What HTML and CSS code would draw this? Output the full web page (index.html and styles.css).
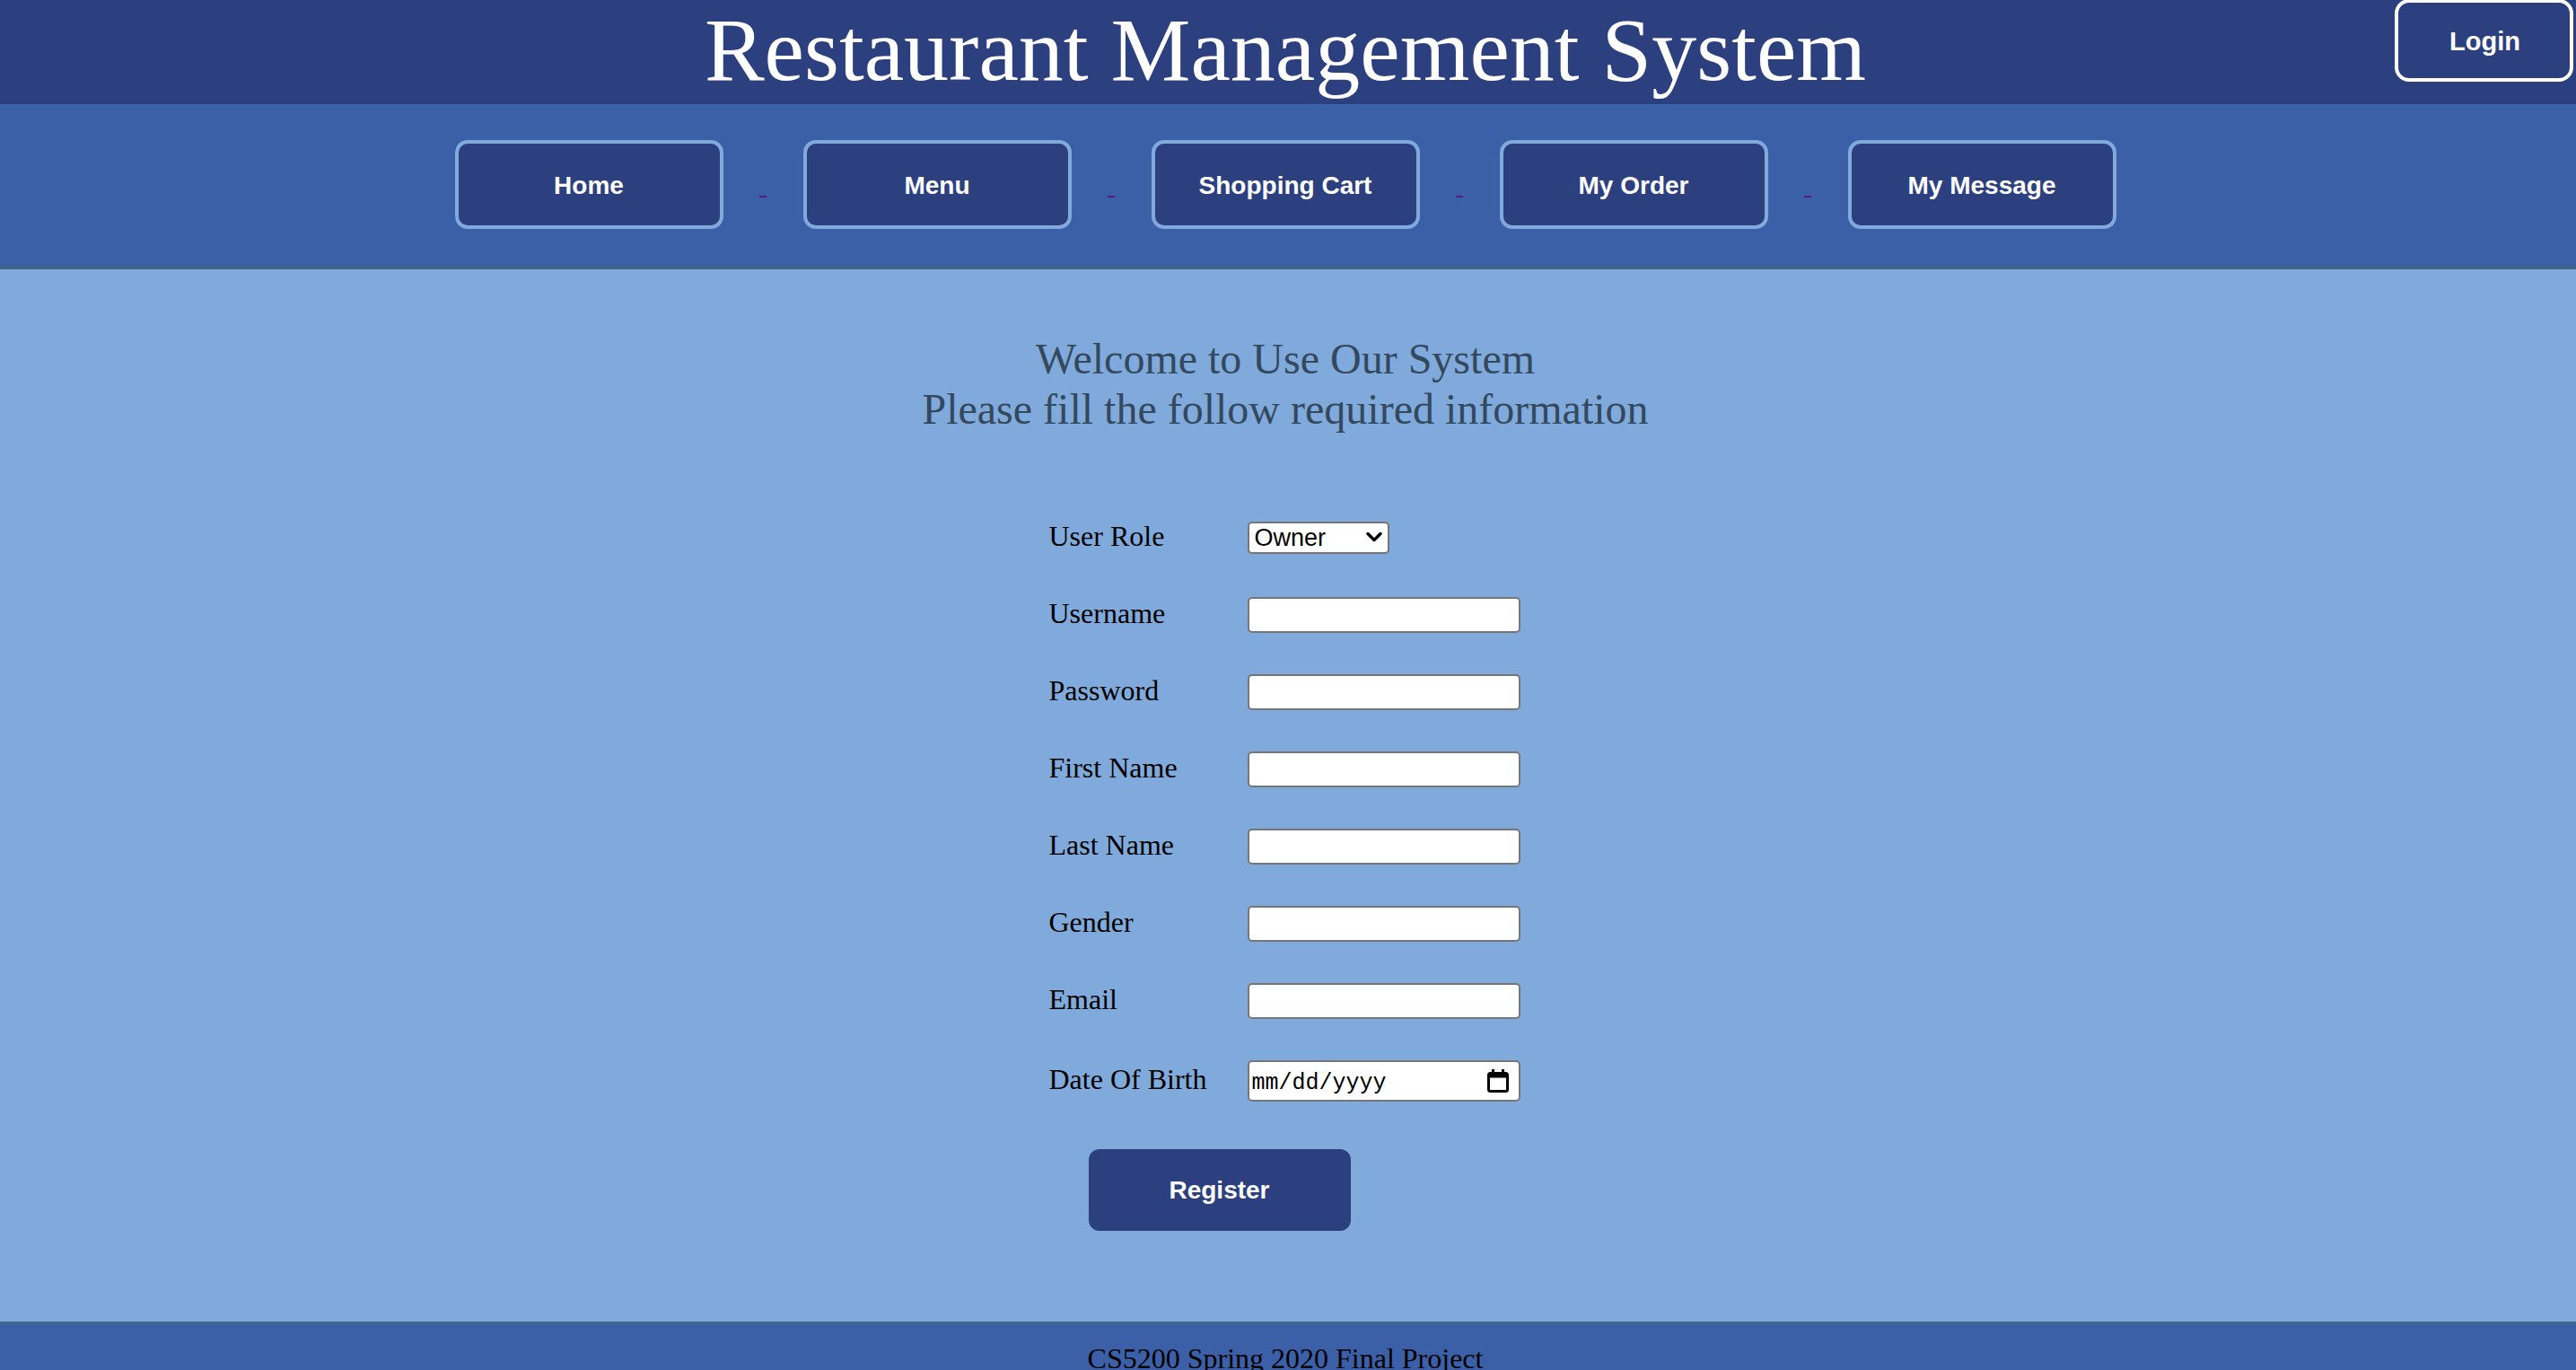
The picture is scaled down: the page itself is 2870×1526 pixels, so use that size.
FILE: index.html
```html
<!DOCTYPE html>
<html lang="en">
<head>
<meta charset="utf-8">
<title>Restaurant Management System</title>
<link rel="stylesheet" href="styles.css">
</head>
<body>
<header class="site-header">
  <h1 class="site-title">Restaurant Management System</h1>
  <button class="login-btn" type="button">Login</button>
</header>

<nav class="main-nav">
  <button class="nav-btn" type="button">Home</button><span class="nav-sep"></span>
  <button class="nav-btn" type="button">Menu</button><span class="nav-sep"></span>
  <button class="nav-btn" type="button">Shopping Cart</button><span class="nav-sep"></span>
  <button class="nav-btn" type="button">My Order</button><span class="nav-sep"></span>
  <button class="nav-btn" type="button">My Message</button>
</nav>

<main class="content">
  <div class="welcome">
    <div>Welcome to Use Our System</div>
    <div>Please fill the follow required information</div>
  </div>

  <form class="reg-form">
    <div class="form-grid">
      <label class="field-label" for="role">User Role</label>
      <span class="select-wrap">
        <select id="role" class="role-select">
          <option>Owner</option>
          <option>Customer</option>
        </select>
        <svg class="select-arrow" width="18" height="13" viewBox="0 0 18 13"><polyline points="2,2.5 9,9.5 16,2.5" fill="none" stroke="#000" stroke-width="3.4" stroke-linecap="round" stroke-linejoin="round"/></svg>
      </span>

      <label class="field-label" for="username">Username</label>
      <input id="username" class="text-input" type="text">

      <label class="field-label" for="password">Password</label>
      <input id="password" class="text-input" type="password">

      <label class="field-label" for="first">First Name</label>
      <input id="first" class="text-input" type="text">

      <label class="field-label" for="last">Last Name</label>
      <input id="last" class="text-input" type="text">

      <label class="field-label" for="gender">Gender</label>
      <input id="gender" class="text-input" type="text">

      <label class="field-label" for="email">Email</label>
      <input id="email" class="text-input" type="text">

      <label class="field-label" for="dob">Date Of Birth</label>
      <span class="date-box">
        <span class="date-text">mm/dd/yyyy</span>
        <svg class="cal-icon" width="26" height="28" viewBox="0 0 26 28"><rect x="2.5" y="5.5" width="21" height="20" rx="2" fill="none" stroke="#000" stroke-width="3"/><rect x="2.5" y="5.5" width="21" height="5" fill="#000"/><rect x="6" y="1" width="3" height="6" fill="#000"/><rect x="17" y="1" width="3" height="6" fill="#000"/></svg>
      </span>
    </div>
    <button class="register-btn" type="button">Register</button>
  </form>
</main>

<footer class="site-footer">CS5200 Spring 2020 Final Project</footer>
</body>
</html>
```

FILE: styles.css
```css
html, body {
  margin: 0;
  padding: 0;
}

body {
  background: #7faadb;
  font-family: "Liberation Serif", "Times New Roman", serif;
  color: #000;
}

.site-header {
  position: relative;
  background: #2c3f7e;
  height: 116px;
  padding-right: 6px;
  text-align: center;
}

.site-title {
  margin: 0;
  font-family: "Liberation Serif", "Times New Roman", serif;
  font-weight: normal;
  font-size: 100px;
  line-height: 112px;
  color: #ffffff;
}

.login-btn {
  position: absolute;
  top: -1px;
  right: 3px;
  width: 199px;
  height: 92px;
  box-sizing: border-box;
  background: #2c3f7e;
  border: 4px solid #ffffff;
  border-radius: 16px;
  color: #ffffff;
  font-family: "Liberation Sans", Arial, sans-serif;
  font-weight: bold;
  font-size: 29px;
  padding: 2px 0 0 2px;
  cursor: pointer;
}

.main-nav {
  background: #3c60a8;
  border-bottom: 4px solid #3e6489;
  padding: 40px 6px 41px 0;
  display: flex;
  justify-content: center;
  align-items: flex-start;
}

.nav-btn {
  width: 299px;
  height: 99px;
  box-sizing: border-box;
  background: #2c3f7e;
  border: 4px solid #7faadb;
  border-radius: 14px;
  color: #ffffff;
  font-family: "Liberation Sans", Arial, sans-serif;
  font-weight: bold;
  font-size: 28px;
  padding: 2px 0 0 0;
  cursor: pointer;
}

.nav-sep {
  width: 8px;
  height: 2px;
  margin: 62px 41px 0 40px;
  background: #551a8b;
}

.content {
  padding: 72px 6px 101px 0;
}

.welcome {
  text-align: center;
  color: #34495e;
  font-size: 48px;
  line-height: 56px;
}

.reg-form {
  width: 525px;
  margin: 95px auto 0;
  position: relative;
  left: -1px;
}

.form-grid {
  display: grid;
  grid-template-columns: 221px 304px;
  row-gap: 46px;
  align-items: center;
}

.field-label {
  font-size: 32px;
  line-height: 37px;
  padding-bottom: 3px;
}

.select-wrap {
  position: relative;
  display: block;
  width: 158px;
  height: 36px;
}

.role-select {
  -webkit-appearance: none;
  appearance: none;
  width: 158px;
  height: 36px;
  box-sizing: border-box;
  background: #ffffff;
  border: 2px solid #767676;
  border-radius: 5px;
  font-family: "Liberation Sans", Arial, sans-serif;
  font-size: 27px;
  color: #000;
  padding: 0 0 0 6px;
  margin: 0;
}

.select-arrow {
  position: absolute;
  left: 132px;
  top: 11px;
  pointer-events: none;
}

.text-input {
  width: 304px;
  height: 40px;
  box-sizing: border-box;
  background: #ffffff;
  border: 2px solid #767676;
  border-radius: 5px;
  margin: 0;
  padding: 0 6px;
  font-size: 26px;
}

.date-box {
  display: flex;
  align-items: center;
  justify-content: space-between;
  width: 304px;
  height: 46px;
  box-sizing: border-box;
  background: #ffffff;
  border: 2px solid #767676;
  border-radius: 5px;
  padding: 0 10px 0 3px;
}

.date-text {
  font-family: "Liberation Mono", "Courier New", monospace;
  font-size: 25px;
  padding-top: 4px;
}

.cal-icon {
  display: block;
}

.register-btn {
  display: block;
  margin: 53px 0 0 44px;
  width: 292px;
  height: 91px;
  background: #2c3f7e;
  border: none;
  border-radius: 12px;
  color: #ffffff;
  font-family: "Liberation Sans", Arial, sans-serif;
  font-weight: bold;
  font-size: 28px;
  padding: 0;
  cursor: pointer;
}

.site-footer {
  background: #3c60a8;
  border-top: 3px solid #3e6a8c;
  padding: 20px 6px 20px 0;
  text-align: center;
  font-size: 32px;
  line-height: 37px;
  color: #000;
}
```
